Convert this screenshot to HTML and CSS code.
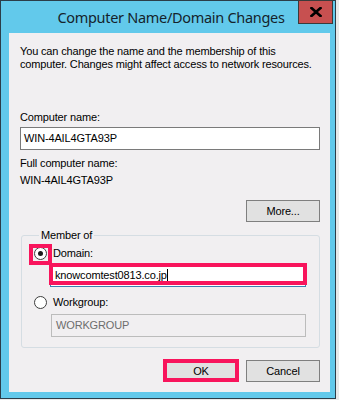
FILE: index.html
```html
<!DOCTYPE html>
<html lang="en">
<head>
    <meta charset="UTF-8">
    <meta name="viewport" content="width=device-width, initial-scale=1.0">
    <title>Computer Name/Domain Changes</title>
    <link rel="stylesheet" href="styles.css">
</head>
<body>
    <div class="window">
        <div class="titlebar">
            <span></span>
            <h1 class="title">Computer Name/Domain Changes</h1>
            <button class="close" aria-label="Close">
                <svg width="12" height="10" viewBox="0 0 12 10">
                    <path d="M1.5 1 L10.5 9 M10.5 1 L1.5 9" stroke="#000" stroke-width="2.6" stroke-linecap="square" fill="none"/>
                </svg>
            </button>
        </div>

        <div class="panel">
            <p class="intro">You can change the name and the membership of this<br>computer. Changes might affect access to network resources.</p>

            <div class="label first">Computer name:</div>
            <div class="textbox">WIN-4AIL4GTA93P</div>

            <div class="label full">Full computer name:</div>
            <div class="value">WIN-4AIL4GTA93P</div>

            <div class="more-row">
                <button class="btn">More...</button>
            </div>

            <fieldset class="group">
                <legend>Member of</legend>
                <div class="option">
                    <span class="radio checked mark mark-radio"></span>
                    <span>Domain:</span>
                </div>
                <div class="textbox domain mark mark-input">knowcomtest0813.co.jp<span class="caret"></span></div>
                <div class="option workgroup">
                    <span class="radio"></span>
                    <span>Workgroup:</span>
                </div>
                <div class="textbox disabled">WORKGROUP</div>
            </fieldset>

            <div class="actions">
                <button class="btn mark mark-btn">OK</button>
                <button class="btn">Cancel</button>
            </div>
        </div>
    </div>
</body>
</html>
```

FILE: styles.css
```css
html {
    background: #e9e9e9;
}
body {
    margin: 0;
    font-family: "Liberation Sans", Arial, sans-serif;
    font-size: 11px;
    line-height: 13px;
    letter-spacing: -0.15px;
    color: #000;
}
.window {
    box-sizing: border-box;
    width: 336px;
    height: 399px;
    border: 1px solid #2b3d49;
    background: #62c9eb;
    padding: 0 5px 6px 8px;
}
.titlebar {
    display: grid;
    grid-template-columns: 1fr auto 1fr;
    align-items: start;
    height: 32px;
    margin-right: -3px;
}
.title {
    margin: 0;
    padding-top: 6px;
    font-family: "Noto Sans", sans-serif;
    font-weight: normal;
    font-size: 14.5px;
    line-height: 20px;
    letter-spacing: -0.3px;
    color: #15232b;
    white-space: nowrap;
}
.close {
    justify-self: end;
    margin-top: -1px;
    width: 35px;
    height: 24px;
    padding: 0;
    border: 1px solid #3a3a3a;
    background: #c75050;
    display: flex;
    align-items: center;
    justify-content: center;
}
.panel {
    height: 359px;
    box-sizing: border-box;
    background: #f1eff1;
    padding: 12px 10px 0 11px;
}
.intro {
    margin: 0;
    white-space: nowrap;
}
.label.first {
    margin-top: 40px;
}
.label.full {
    margin-top: 7px;
}
.textbox {
    box-sizing: border-box;
    height: 23px;
    margin-top: 3px;
    border: 1px solid #7a7a7a;
    background: #fff;
    padding: 4px 3px;
    line-height: 13px;
}
.value {
    margin-top: 4px;
}
.more-row {
    display: flex;
    justify-content: flex-end;
    margin-top: 13px;
}
.btn {
    box-sizing: border-box;
    width: 74px;
    height: 22px;
    border: 1px solid #7f7f7f;
    background: #e1e1e1;
    font-family: inherit;
    font-size: 11px;
    letter-spacing: inherit;
    color: #000;
    padding: 0;
}
.group {
    margin: 7px 0 0 1px;
    padding: 5px 13px 10px 12px;
    border: 1px solid #d5dde3;
    border-radius: 3px;
}
.group legend {
    margin-left: 5px;
    padding: 0 2px;
}
.option {
    display: flex;
    align-items: center;
    gap: 6px;
    height: 13px;
}
.option.workgroup {
    margin-top: 9px;
}
.radio {
    box-sizing: border-box;
    width: 13px;
    height: 13px;
    border: 1px solid #3d3d3d;
    border-radius: 50%;
    background: #fff;
    display: flex;
    align-items: center;
    justify-content: center;
}
.radio.checked::before {
    content: "";
    width: 5px;
    height: 5px;
    border-radius: 50%;
    background: #1a1a1a;
}
.group .textbox {
    margin: 4px 0 0 16px;
}
.textbox.domain {
    border-color: #3c7fb1;
    padding-left: 4px;
}
.caret {
    display: inline-block;
    width: 1px;
    height: 13px;
    background: #000;
    vertical-align: top;
}
.group .textbox.disabled {
    margin: 5px 0 0 17px;
    border-color: #bcbcbc;
    background: #f1eff1;
    color: #6d6d6d;
    padding-left: 4px;
}
.actions {
    display: flex;
    justify-content: flex-end;
    gap: 8px;
    margin-top: 12px;
}
.mark {
    position: relative;
}
.mark::after {
    content: "";
    position: absolute;
    border: 4px solid #f8145c;
}
.mark-radio::after {
    top: -4px;
    left: -6px;
    right: -6px;
    bottom: -6px;
}
.mark-input::after {
    top: -2px;
    left: -2px;
    right: -2px;
    bottom: 1px;
}
.mark-btn::after {
    top: -2px;
    left: -2px;
    right: -2px;
    bottom: -1px;
}
```
